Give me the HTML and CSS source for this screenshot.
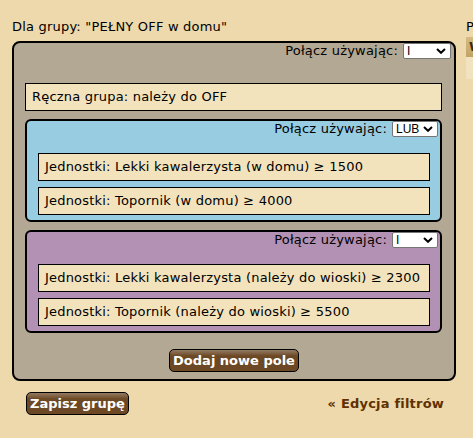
FILE: index.html
```html
<!DOCTYPE html>
<html lang="pl">
<head>
<meta charset="utf-8">
<title>Edycja grupy</title>
<link rel="stylesheet" href="styles.css">
</head>
<body>
<div class="page">
  <main class="main">
    <p class="title">Dla grupy: "PEŁNY OFF w domu"</p>
    <div class="group group-root">
      <div class="combine combine-root">
        <span class="combine-label">Połącz używając:</span>
        <span class="sel-wrap sel-root">
          <select class="sel"><option>I</option><option>LUB</option></select>
          <svg class="chev" width="10" height="6" viewBox="0 0 10 6"><path d="M1 1 L5 4.8 L9 1" fill="none" stroke="#000" stroke-width="2"/></svg>
        </span>
      </div>
      <div class="items items-root">
        <div class="cond">Ręczna grupa: należy do OFF</div>
        <div class="group group-blue">
          <div class="combine">
            <span class="combine-label">Połącz używając:</span>
            <span class="sel-wrap">
              <select class="sel"><option>LUB</option><option>I</option></select>
              <svg class="chev" width="10" height="6" viewBox="0 0 10 6"><path d="M1 1 L5 4.8 L9 1" fill="none" stroke="#000" stroke-width="2"/></svg>
            </span>
          </div>
          <div class="items">
            <div class="cond">Jednostki: Lekki kawalerzysta (w domu) ≥ 1500</div>
            <div class="cond">Jednostki: Topornik (w domu) ≥ 4000</div>
          </div>
        </div>
        <div class="group group-purple">
          <div class="combine">
            <span class="combine-label">Połącz używając:</span>
            <span class="sel-wrap">
              <select class="sel"><option>I</option><option>LUB</option></select>
              <svg class="chev" width="10" height="6" viewBox="0 0 10 6"><path d="M1 1 L5 4.8 L9 1" fill="none" stroke="#000" stroke-width="2"/></svg>
            </span>
          </div>
          <div class="items">
            <div class="cond">Jednostki: Lekki kawalerzysta (należy do wioski) ≥ 2300</div>
            <div class="cond">Jednostki: Topornik (należy do wioski) ≥ 5500</div>
          </div>
        </div>
      </div>
      <div class="add-row"><button class="btn">Dodaj nowe pole</button></div>
    </div>
    <div class="footer">
      <button class="btn">Zapisz grupę</button>
      <a class="back" href="#">« Edycja filtrów</a>
    </div>
  </main>
  <aside class="side">
    <p class="side-title">P</p>
    <div class="side-head">W</div>
    <div class="side-body"></div>
  </aside>
</div>
</body>
</html>
```

FILE: styles.css
```css
html, body {
  margin: 0;
  padding: 0;
  width: 473px;
  height: 438px;
  overflow: hidden;
}

body {
  background: #edd9ac;
  font-family: "DejaVu Sans", Verdana, sans-serif;
  font-size: 13px;
  letter-spacing: 0.2px;
  color: #000;
}

.page {
  display: flex;
  align-items: flex-start;
  gap: 10px;
  padding-left: 12px;
}

.main {
  width: 444px;
  flex-shrink: 0;
}

.title {
  margin: 19px 0 6px;
  line-height: 16px;
}

.group {
  border: 2px solid #000;
  border-radius: 6px;
}

.group-root {
  background: #b3a893;
  border-radius: 8px;
  padding-bottom: 7px;
}

.group-blue {
  background: #98cce0;
  padding-bottom: 5px;
}

.group-purple {
  background: #b391b5;
  padding-bottom: 5px;
}

.combine {
  display: flex;
  justify-content: flex-end;
  align-items: center;
  gap: 5px;
  height: 16px;
  padding-right: 2px;
  margin-bottom: 16px;
  line-height: 16px;
}

.combine-root {
  padding-right: 3px;
  margin-bottom: 24px;
}

.sel-wrap {
  position: relative;
  display: block;
  width: 46px;
  height: 16px;
}

.sel-wrap.sel-root {
  width: 48px;
}

.sel {
  -webkit-appearance: none;
  appearance: none;
  display: block;
  width: 100%;
  height: 16px;
  padding: 0 0 0 3px;
  margin: 0;
  font-family: "Liberation Sans", Arial, sans-serif;
  font-size: 12px;
  line-height: 14px;
  letter-spacing: 0;
  background: #fff;
  border: 1px solid #767676;
  border-radius: 2px;
  color: #000;
}

.chev {
  position: absolute;
  right: 5px;
  top: 5px;
  pointer-events: none;
}

.items {
  display: flex;
  flex-direction: column;
  gap: 6px;
  padding: 0 10px 0 11px;
}

.items-root {
  gap: 8px;
  padding: 0 12px 0 11px;
}

.cond {
  background: #f3e3bd;
  border: 1px solid #000;
  padding: 5px 6px;
  line-height: 16px;
  white-space: nowrap;
}

.add-row {
  display: flex;
  justify-content: center;
  margin-top: 16px;
}

.btn {
  font-family: "DejaVu Sans", Verdana, sans-serif;
  font-size: 13px;
  letter-spacing: 0;
  font-weight: bold;
  color: #fff;
  height: 23px;
  padding: 0 3px;
  line-height: 21px;
  border: 1px solid #000;
  border-radius: 5px;
  background: linear-gradient(to bottom, #947a62 0%, #7b5c3d 18%, #6c4824 28%, #6c4824 100%);
  cursor: pointer;
}

.footer {
  display: flex;
  justify-content: space-between;
  align-items: center;
  margin-top: 11px;
  padding: 0 12px 0 14px;
}

.back {
  color: #603000;
  font-weight: bold;
  font-size: 13px;
  text-decoration: none;
  line-height: 16px;
}

.side {
  width: 120px;
  flex-shrink: 0;
}

.side-title {
  margin: 19px 0 2px;
  line-height: 16px;
}

.side-head {
  background: linear-gradient(to bottom, #d5bb82, #c2a366);
  font-weight: bold;
  color: #3a2a10;
  padding: 2px 3px;
  line-height: 16px;
}

.side-body {
  background: #f1e3bf;
  height: 22px;
}
```
